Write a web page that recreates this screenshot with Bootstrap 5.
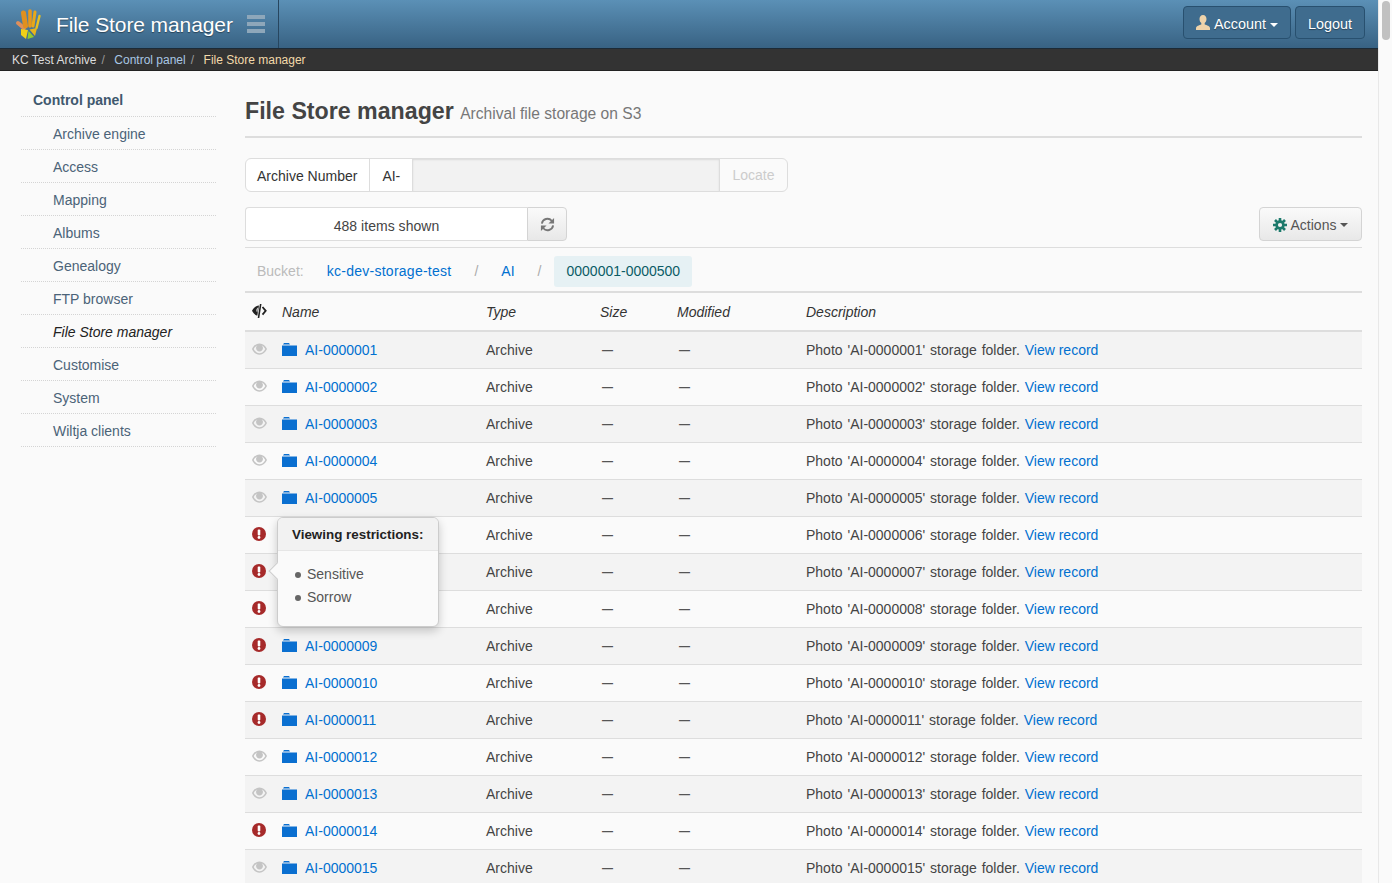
<!DOCTYPE html>
<html lang="en">
<head>
  <meta charset="UTF-8" />
  <title>File Store manager</title>
  <link href="https://cdn.jsdelivr.net/npm/bootstrap@5.3.0/dist/css/bootstrap.min.css" rel="stylesheet">
  <style>
    html, body { height: 100%; overflow: hidden; }
    body { background: #fafafa; color: #444; font: 14px/20px "Liberation Sans", Arial, sans-serif; }
    a { color: #0070d0; text-decoration: none; }
    .page-wrap { width: 1378px; }
    .scroll-track { position: fixed; top: 0; right: 0; bottom: 0; width: 14px; background: #fafafa; border-left: 1px solid #e8e8e8; }
    .scroll-thumb { position: absolute; top: 1px; left: 3px; width: 8px; height: 39px; border-radius: 4px; background: #c1c1c1; }

    .top-bar { height: 49px; background: linear-gradient(#5b90b6, #386283); border-bottom: 1px solid #1c2a36; }
    .brand-box { width: 279px; height: 48px; border-right: 1px solid #27465f; padding-left: 15px; }
    .brand-name { color: #fff; font-size: 21px; line-height: 26px; margin: 2px 0 0 15px; text-shadow: 0 1px 1px rgba(0,0,0,.4); letter-spacing: -.1px; }
    .burger { width: 18px; margin-left: 14px; }
    .burger span { display: block; height: 4px; margin: 3px 0; background: #8ea7ba; }
    .top-actions { padding: 0 13px 4px 0; }
    .top-btn { height: 33px; padding: 5px 0 0; font-size: 14.4px; color: #fff; background: #3f6c8e; border: 1px solid #28506f; border-radius: 4px; text-shadow: 0 1px 1px rgba(0,0,0,.4); display: flex; align-items: center; justify-content: center; }
    .top-btn:hover { color: #fff; background: #3f6c8e; border-color: #28506f; }
    .top-btn svg { margin-top: -4px; }
    .account-btn { width: 108px; }
    .logout-btn { width: 70px; }
    .caret-down { display: inline-block; margin-left: 4px; border-top: 4px solid currentColor; border-left: 4px solid transparent; border-right: 4px solid transparent; }

    .crumb-bar { height: 22px; background: #333; border-bottom: 1px solid #222; font-size: 12px; line-height: 23px; padding-left: 12px; color: #ddd; }
    .crumb-bar .breadcrumb { --bs-breadcrumb-margin-bottom: 0; --bs-breadcrumb-item-padding-x: 5px; --bs-breadcrumb-divider-color: #999; }
    .crumb-bar .breadcrumb-item + .breadcrumb-item::before { padding-right: 9.5px; }
    .crumb-bar a { color: #a9c7e4; }
    .crumb-bar .first-crumb { color: #ddd; }
    .crumb-bar .breadcrumb-item.active { color: #f2d9aa; }

    .side-col { width: 245px; flex: none; padding: 13px 29px 0 21px; }
    .side-list { list-style: none; margin: 0; padding: 0; }
    .side-list li { height: 33px; line-height: 34px; padding-left: 32px; border-bottom: 1px dotted #d4d4d4; color: #4b6378; }
    .side-list li.side-head { padding-left: 12px; line-height: 32px; font-weight: 700; color: #40586e; }
    .side-list li.current { color: #222; font-style: italic; }

    .main-col { width: 1117px; flex: none; }
    .page-title { margin: 25px 0 20px; padding-bottom: 11px; border-bottom: 2px solid #ddd; height: 42px; font-size: 23.2px; line-height: 30px; font-weight: 700; color: #444; }
    .page-title small { font-size: 15.6px; font-weight: 400; color: #777; }

    .locate-group { width: 543px; height: 34px; margin-bottom: 15px; }
    .locate-group .input-group-text { background: #fff; color: #333; font-size: 14px; line-height: 18px; padding: 1px 12px 0; border-color: #ddd; }
    .locate-group .input-group-text:first-child { padding-left: 11px; }
    .locate-group .form-control { height: 34px; min-height: 34px; background: #f2f2f2; border-color: #ddd; box-shadow: inset 0 1px 2px rgba(0,0,0,.1); }
    .locate-group .btn { width: 69px; font-size: 14px; padding: 1px 0 0; color: #ccc; background: #fafafa; border: 1px solid #ddd; opacity: 1; }

    .tool-row { height: 41px; border-bottom: 1px solid #ddd; }
    .count-box { width: 322px; height: 34px; }
    .count-box .count-text { flex: 1; background: #fff; border: 1px solid #ddd; border-right: 0; border-radius: 4px 0 0 4px; text-align: center; line-height: 36px; color: #444; letter-spacing: .03px; }
    .grey-btn { background: linear-gradient(#fafafa, #e8e8e8); border: 1px solid #d4d4d4; color: #555; padding: 0; display: flex; align-items: center; justify-content: center; }
    .grey-btn:hover { background: linear-gradient(#fafafa, #e8e8e8); border-color: #d4d4d4; color: #555; }
    .count-box .grey-btn { width: 40px; border-radius: 0 4px 4px 0; }
    .actions-btn { width: 103px; height: 34px; font-size: 14px; line-height: 20px; padding-top: 1px; border-radius: 4px; gap: 4px; }

    .path-row { height: 45px; border-bottom: 2px solid #ddd; padding: 8px 0 6px 12px; line-height: 31px; }
    .path-row .muted-label { color: #bbb; margin-right: 23px; }
    .path-row .bucket-link { letter-spacing: .26px; }
    .path-row .sep { color: #aaa; margin: 0 23px; }
    .path-row .path-now { display: inline-block; height: 31px; padding: 0 12px; margin-left: -10px; background: #e6f1f4; border-radius: 3px; color: #0b5c66; }

    .store-table { width: 100%; table-layout: fixed; margin: 0; }
    .store-table th, .store-table td { padding: 0; vertical-align: middle; box-shadow: none; background: transparent; color: #444; }
    .store-table thead th { height: 38px; font-weight: 400; font-style: italic; color: #333; border-bottom: 2px solid #ddd; }
    .store-table tbody td { height: 37px; border-bottom: 1px solid #ddd; }
    .store-table tbody tr:nth-child(odd) td { background: #f3f3f3; }
    .store-table .flag-cell { padding-left: 7px; }
    .store-table .flag-cell svg { margin-top: -2px; }
    .store-table svg { display: block; }
    .name-wrap { display: flex; align-items: center; gap: 8px; }
    .store-table .dash-mark { font-size: 11px; font-weight: 700; padding-left: 2px; color: #555; }
    .store-table .desc-cell { word-spacing: 1px; }
    .desc-cell a { word-spacing: 0; }

    .restrict-pop { position: absolute; left: 277px; top: 517px; width: 162px; height: 110px; background: #fafafa; border: 1px solid #ccc; border-radius: 6px; box-shadow: 0 4px 10px rgba(0,0,0,.2); z-index: 5; }
    .restrict-pop::before { content: ""; position: absolute; left: -7px; top: 47px; width: 12px; height: 12px; background: #fafafa; border-left: 1px solid #ccc; border-bottom: 1px solid #ccc; transform: rotate(45deg); }
    .restrict-pop h6 { position: relative; height: 33px; margin: 0; padding: 0 0 0 14px; white-space: nowrap; font: 700 13.4px/34px "Liberation Sans", Arial, sans-serif; color: #222; background: #f2f2f2; border-bottom: 1px solid #e6e6e6; border-radius: 5px 5px 0 0; }
    .restrict-pop ul { position: relative; list-style: none; margin: 12px 0 0; padding: 0 0 0 17px; }
    .restrict-pop li { height: 23px; line-height: 23px; color: #555; display: flex; align-items: center; gap: 6px; }
    .restrict-pop li::before { content: ""; width: 6px; height: 6px; border-radius: 50%; background: #666; }
  </style>
</head>
<body>
  <svg width="0" height="0" class="position-absolute">
    <symbol id="eye" viewBox="0 0 16 12"><path fill="#c4c4c4" d="M8 0C4.500 0 1.500 2.300 0 6c1.500 3.700 4.500 6 8 6s6.500-2.300 8-6c-1.500-3.700-4.500-6-8-6zm0 10.500C5.500 10.500 3.300 8.900 1.800 6 3 3.800 4.500 2.400 6 1.900 4.900 2.600 4.300 3.700 4.300 5c0 2 1.700 3.700 3.700 3.700s3.700-1.700 3.700-3.700c0-1.300-.6-2.400-1.700-3.100 1.500.5 3 1.900 4.200 4.100-1.500 2.900-3.700 4.500-6.200 4.500z"/></symbol>
    <symbol id="alert" viewBox="0 0 14 14"><circle cx="7" cy="7" r="7" fill="#a62a2a"/><rect x="5.700" y="2.600" width="2.600" height="5.800" rx=".8" fill="#fff"/><circle cx="7" cy="10.500" r="1.400" fill="#fff"/></symbol>
    <symbol id="folder" viewBox="0 0 15 13"><path fill="#0a6fd0" d="M0 2.500h15V13H0zM2 0h5l1 1.500H1z"/></symbol>
  </svg>

  <div class="page-wrap">
    <header class="top-bar d-flex justify-content-between">
      <div class="brand-box d-flex align-items-center">
        <svg width="26" height="31" viewBox="7 5 26 31" fill="none" stroke-linecap="round">
          <path stroke="#dd8f5c" stroke-width="4" d="M10 19l6 5"/>
          <path stroke="#e0901f" stroke-width="5" d="M15.500 9l2 13"/>
          <path stroke="#e8981a" stroke-width="3.600" d="M22 7v15"/>
          <path stroke="#e8a818" stroke-width="3" d="M27 8l-2 14"/>
          <path stroke="#e8c020" stroke-width="2.400" d="M31.500 12l-3 12"/>
          <path fill="#f0d018" d="M13 25l7 1-2 9-5-4z"/>
          <path fill="#94cc2e" d="M20.500 27l5.500 6-6.500 2z"/>
          <path fill="#e8b41c" d="M21.500 25.500l7.500-1.500-2 8z"/>
        </svg>
        <span class="brand-name">File Store manager</span>
        <div class="burger"><span></span><span></span><span></span></div>
      </div>
      <div class="top-actions d-flex align-items-center gap-1">
        <button class="btn top-btn account-btn" type="button">
          <svg width="14" height="15" viewBox="0 0 14 15" class="me-1"><path fill="#eed3aa" d="M7 0c2.200 0 3.500 1.700 3.500 4 0 1.800-.8 3.300-1.800 4.100v1.300c2 .6 5.300 1.600 5.300 3.600v2H0v-2c0-2 3.300-3 5.300-3.600V8.100C4.300 7.300 3.500 5.800 3.500 4 3.500 1.700 4.800 0 7 0z"/></svg>
          Account<span class="caret-down"></span>
        </button>
        <button class="btn top-btn logout-btn" type="button">Logout</button>
      </div>
    </header>

    <nav class="crumb-bar" aria-label="breadcrumb">
      <ol class="breadcrumb">
        <li class="breadcrumb-item first-crumb">KC Test Archive</li>
        <li class="breadcrumb-item"><a href="#">Control panel</a></li>
        <li class="breadcrumb-item active">File Store manager</li>
      </ol>
    </nav>

    <div class="d-flex">
      <aside class="side-col">
        <ul class="side-list">
          <li class="side-head">Control panel</li>
          <li>Archive engine</li>
          <li>Access</li>
          <li>Mapping</li>
          <li>Albums</li>
          <li>Genealogy</li>
          <li>FTP browser</li>
          <li class="current">File Store manager</li>
          <li>Customise</li>
          <li>System</li>
          <li>Wiltja clients</li>
        </ul>
      </aside>

      <main class="main-col">
        <h1 class="page-title">File Store manager <small>Archival file storage on S3</small></h1>

        <div class="input-group locate-group">
          <span class="input-group-text">Archive Number</span>
          <span class="input-group-text">AI-</span>
          <input type="text" class="form-control" disabled>
          <button class="btn" type="button" disabled>Locate</button>
        </div>

        <div class="tool-row d-flex justify-content-between align-items-start">
          <div class="count-box d-flex">
            <div class="count-text">488 items shown</div>
            <button class="btn grey-btn" type="button">
              <svg width="15" height="15" viewBox="0 0 16 16" fill="none" stroke="#777" stroke-width="2"><path d="M2 7a6 6 0 0 1 10.500-3L14 5.500"/><path d="M14 9a6 6 0 0 1-10.500 3L2 10.500"/><path fill="#777" stroke="none" d="M15 1v6H9zM1 15V9h6z"/></svg>
            </button>
          </div>
          <button class="btn grey-btn actions-btn" type="button">
            <svg width="14" height="14" viewBox="0 0 14 14"><g stroke="#1d7a6c" stroke-width="2.600"><path d="M7 0v14M0 7h14M2 2l10 10M12 2L2 12"/></g><circle cx="7" cy="7" r="3.400" fill="none" stroke="#1d7a6c" stroke-width="2.600"/><circle cx="7" cy="7" r="2.100" fill="#f1f1f1"/></svg>
            Actions<span class="caret-down ms-0"></span>
          </button>
        </div>

        <div class="path-row">
          <span class="muted-label">Bucket:</span><a class="bucket-link" href="#">kc-dev-storage-test</a><span class="sep">/</span><a href="#">AI</a><span class="sep">/</span><span class="path-now">0000001-0000500</span>
        </div>

        <table class="table store-table">
          <colgroup><col style="width:37px"><col style="width:204px"><col style="width:114px"><col style="width:77px"><col style="width:129px"><col></colgroup>
          <thead>
            <tr>
              <th class="flag-cell">
                <svg width="15" height="14" viewBox="0 0 15 14"><path fill="#222" fill-rule="evenodd" d="M7 1.600C4 1.800 1.500 3.900 0 6.800c1.200 2.400 3 4.200 5.300 4.900L7 1.600zM5.900 3.400c-.9.600-1.500 1.700-1.500 2.900 0 .9.300 1.700.9 2.300l.6-5.200z"/><path fill="#222" d="M7.900 0h1.600L7.300 14H5.700z"/><path fill="none" stroke="#222" stroke-width="1.800" d="M10.500 3l3.200 3.800-3.200 3.800"/></svg>
              </th>
              <th>Name</th><th>Type</th><th>Size</th><th>Modified</th><th>Description</th>
            </tr>
          </thead>
          <tbody id="filas"></tbody>
        </table>
      </main>
    </div>
  </div>

  <div class="restrict-pop">
    <h6>Viewing restrictions:</h6>
    <ul>
      <li>Sensitive</li>
      <li>Sorrow</li>
    </ul>
  </div>

  <div class="scroll-track"><div class="scroll-thumb"></div></div>

  <script>
    // rows with a restriction show the red mark, the rest the grey eye
    const restringidos = [6, 7, 8, 9, 10, 11, 14];
    const filas = document.getElementById('filas');
    for (let i = 1; i <= 16; i++) {
      const num = 'AI-' + String(i).padStart(7, '0');
      const icono = restringidos.includes(i)
        ? '<svg width="14" height="14"><use href="#alert"/></svg>'
        : '<svg width="15" height="12"><use href="#eye"/></svg>';
      const tr = document.createElement('tr');
      tr.innerHTML = `
        <td class="flag-cell">${icono}</td>
        <td><div class="name-wrap"><svg width="15" height="13"><use href="#folder"/></svg><a href="#">${num}</a></div></td>
        <td>Archive</td>
        <td class="dash-mark">—</td>
        <td class="dash-mark">—</td>
        <td class="desc-cell">Photo '${num}' storage folder. <a href="#">View record</a></td>`;
      filas.appendChild(tr);
    }
  </script>
</body>
</html>
